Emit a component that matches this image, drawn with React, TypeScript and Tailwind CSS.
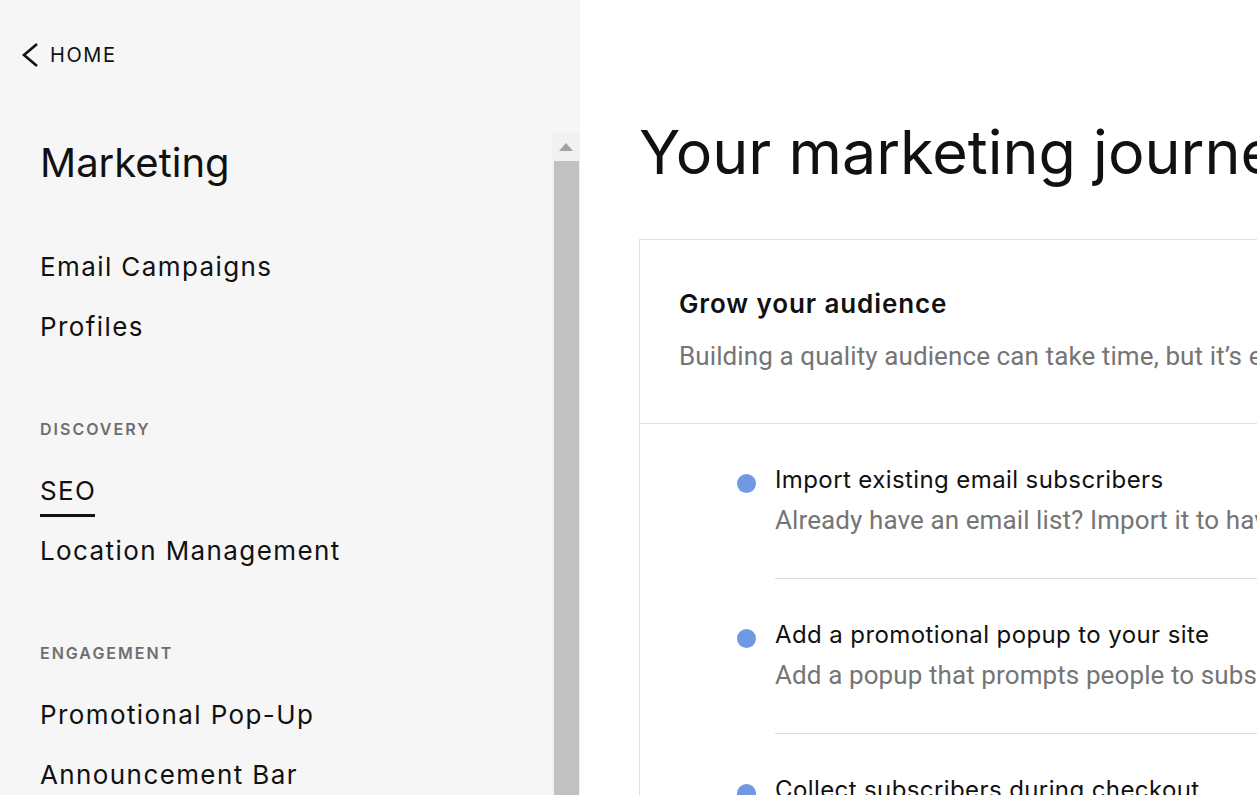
import React from 'react';

const sans = "font-['Inter','Noto_Sans',sans-serif]";
const body = "font-['Roboto','Liberation_Sans',sans-serif]";

const NavItem = ({ label, active = false }: { label: string; active?: boolean }) => (
  <div className="h-[60px] flex items-center">
    <span className={`relative text-[26px] leading-[30px] tracking-[1.4px] text-[#111111] ${sans}`}>
      {label}
      {active && <span className="absolute left-0 right-[1px] -bottom-[11px] h-[3px] bg-[#111111]" />}
    </span>
  </div>
);

const SectionLabel = ({ label }: { label: string }) => (
  <div className={`mt-[62px] h-[20px] flex items-center text-[16px] font-semibold tracking-[2px] text-[#6e6e6e] ${sans}`}>
    {label}
  </div>
);

const steps = [
  {
    title: 'Import existing email subscribers',
    desc: 'Already have an email list? Import it to have all your subscribers in one place.',
  },
  {
    title: 'Add a promotional popup to your site',
    desc: 'Add a popup that prompts people to subscribe to your mailing list.',
  },
  {
    title: 'Collect subscribers during checkout',
    desc: 'Let customers sign up for your mailing list when they buy.',
  },
];

const App = () => {
  return (
    <div className="flex h-screen w-full overflow-hidden bg-white">
      <aside className="w-[580px] shrink-0 bg-[#f6f6f6] flex flex-col">
        <div className="h-[132px] shrink-0">
          <a href="#" className="flex items-center gap-[11px] pl-[20px] pt-[40px]">
            <svg width="19" height="26" viewBox="0 0 19 26" fill="none">
              <polyline points="17,2 4,13 17,24" stroke="#111111" strokeWidth="2.6" strokeLinecap="butt" strokeLinejoin="miter" />
            </svg>
            <span className={`text-[20px] tracking-[1.6px] text-[#111111] ${sans}`}>HOME</span>
          </a>
        </div>
        <div className="flex flex-1 min-h-0">
          <nav className="flex-1 pl-[40px]">
            <div className={`h-[62px] flex items-center text-[40px] text-[#111111] ${sans}`}>Marketing</div>
            <div className="mt-[43px]">
              <NavItem label="Email Campaigns" />
              <NavItem label="Profiles" />
            </div>
            <SectionLabel label="DISCOVERY" />
            <div className="mt-[22px]">
              <NavItem label="SEO" active />
              <NavItem label="Location Management" />
            </div>
            <SectionLabel label="ENGAGEMENT" />
            <div className="mt-[22px]">
              <NavItem label="Promotional Pop-Up" />
              <NavItem label="Announcement Bar" />
            </div>
          </nav>
          <div className="w-[28px] shrink-0 bg-[#f1f1f1] flex flex-col">
            <div className="h-[29px] flex items-center justify-center">
              <svg width="14" height="8" viewBox="0 0 14 8">
                <polygon points="7,0 14,8 0,8" fill="#a3a3a3" />
              </svg>
            </div>
            <div className="flex-1 ml-[2px] mr-[1px] bg-[#c1c1c1]" />
          </div>
        </div>
      </aside>

      <main className="flex-1 min-w-0 overflow-hidden pl-[59px] pt-[110px]">
        <h1 className={`text-[61px] leading-[84px] whitespace-nowrap text-[#111111] ${sans}`}>
          Your marketing journey
        </h1>
        <div className="mt-[45px] w-[1000px] border-l border-t border-[#e0e0e0]">
          <div className="pt-[44px] pb-[47px] px-[39px] border-b border-[#e0e0e0]">
            <h2 className={`text-[26px] leading-[40px] font-semibold tracking-[0.9px] text-[#111111] ${sans}`}>Grow your audience</h2>
            <p className={`mt-[12px] text-[26px] leading-[40px] tracking-[0.1px] text-[#757575] whitespace-nowrap ${body}`}>
              Building a quality audience can take time, but it’s easier with the right tools.
            </p>
          </div>
          <ul className="pl-[96px]">
            {steps.map((s) => (
              <li key={s.title} className="flex gap-[19px]">
                <span className="mt-[50px] ml-[1px] w-[19px] h-[19px] shrink-0 rounded-full bg-[#7099e3]" />
                <div className="flex-1 pt-[36px] pb-[38px] border-b border-[#dcdcdc]">
                  <div className={`text-[24px] leading-[40px] tracking-[0.4px] text-[#111111] whitespace-nowrap ${sans}`}>{s.title}</div>
                  <div className={`text-[26px] leading-[40px] tracking-[0.1px] text-[#757575] whitespace-nowrap ${body}`}>{s.desc}</div>
                </div>
              </li>
            ))}
          </ul>
        </div>
      </main>
    </div>
  );
};

export default App;
